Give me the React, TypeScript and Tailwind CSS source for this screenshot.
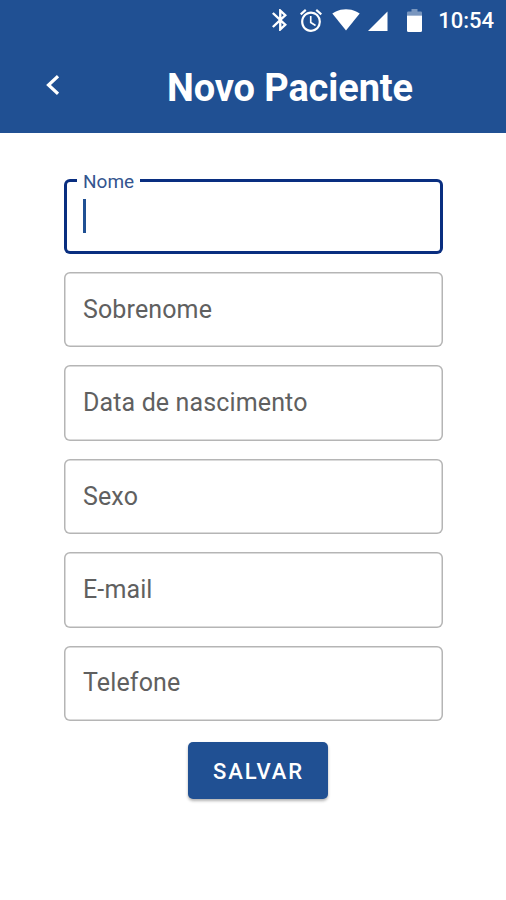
import { useState } from "react";
import { clsx } from "clsx";

const FIELDS = [
  { id: "nome", label: "Nome" },
  { id: "sobrenome", label: "Sobrenome" },
  { id: "nascimento", label: "Data de nascimento" },
  { id: "sexo", label: "Sexo" },
  { id: "email", label: "E-mail" },
  { id: "telefone", label: "Telefone" },
];

function StatusBar() {
  return (
    <div className="flex h-10 items-center pr-3 text-white">
      <svg viewBox="5 2 12.71 20" preserveAspectRatio="none" fill="currentColor" className="ml-auto h-[22px] w-[15px]">
        <path d="M17.71 7.71L12 2h-1v7.59L6.41 5 5 6.41 10.59 12 5 17.59 6.41 19 11 14.41V22h1l5.71-5.71-4.3-4.29 4.3-4.29zM13 5.83l1.88 1.88L13 9.59V5.83zm1.88 10.46L13 18.17v-3.76l1.88 1.88z" />
      </svg>
      <svg viewBox="2 1.8 20 20.2" preserveAspectRatio="none" fill="currentColor" className="ml-[13px] h-[23px] w-[22px]">
        <path d="M22 5.72l-4.6-3.86-1.29 1.53 4.6 3.86L22 5.72zM7.88 3.39L6.6 1.86 2 5.71l1.29 1.53 4.59-3.85zM12.5 8H11v6l4.75 2.85.75-1.23-4-2.37V8zM12 4c-4.97 0-9 4.03-9 9s4.02 9 9 9a9 9 0 0 0 0-18zm0 16c-3.87 0-7-3.13-7-7s3.13-7 7-7 7 3.13 7 7-3.13 7-7 7z" />
      </svg>
      <svg viewBox="0 0 28 22" fill="currentColor" className="ml-2.5 h-[22px] w-7">
        <path d="M14 21.5L27.7 4.6C27 4 21.8.3 14 .3S1 4 .3 4.6z" />
      </svg>
      <svg viewBox="0 0 20 20" fill="currentColor" className="ml-2 mt-0.5 h-5 w-5">
        <path d="M0 20H19.5V.5z" />
      </svg>
      <svg viewBox="0 0 15 23" fill="currentColor" className="ml-[19px] h-[23px] w-[15px]">
        <path opacity=".4" d="M4.5 0h6v2.5h3.3q1.2 0 1.2 1.2V6.5H0V3.7q0-1.2 1.2-1.2h3.3z" />
        <path d="M0 6.5h15v15q0 1.5-1.5 1.5h-12Q0 23 0 21.5z" />
      </svg>
      <span className="ml-4 mt-0.5 text-[22px] leading-6 font-medium">10:54</span>
    </div>
  );
}

function Header() {
  return (
    <header className="h-[133px] bg-[#205093]">
      <StatusBar />
      <div className="flex h-[93px] items-start text-white">
        <button aria-label="Voltar" className="mt-[35px] ml-[46px]">
          <svg viewBox="0 0 13 20" fill="none" stroke="currentColor" strokeWidth="3.2" className="h-5 w-[13px]">
            <path d="M12 1.2L2.5 10l9.500 8.8" />
          </svg>
        </button>
        <h1 className="mt-[25px] ml-[108px] text-[38px] leading-[46px] font-bold tracking-[-0.12px] whitespace-nowrap">
          Novo Paciente
        </h1>
      </div>
    </header>
  );
}

type FieldProps = {
  label: string;
  active: boolean;
  onSelect: () => void;
};

function Field({ label, active, onSelect }: FieldProps) {
  return (
    <div
      onClick={onSelect}
      className={clsx(
        "relative flex h-[75.5px] items-center rounded-md px-[19px]",
        active
          ? "inset-ring-[3px] inset-ring-[#092e80]"
          : "inset-ring-[1.5px] inset-ring-[#b5b5b5]"
      )}
    >
      {active ? (
        <>
          <span className="absolute -top-2 left-[13px] bg-white px-1.5 text-[19px] leading-[22px] text-[#34558f]">
            {label}
          </span>
          <span className="h-[34px] w-[3px] bg-[#205093]" />
        </>
      ) : (
        <span className="text-[25px] leading-8 tracking-[0.13px] text-[#606060]">{label}</span>
      )}
    </div>
  );
}

export default function App() {
  const [active, setActive] = useState("nome");

  return (
    <div className="h-[900px] w-[506px] overflow-hidden bg-white font-['Roboto',sans-serif]">
      <Header />
      <form className="flex flex-col pt-[45.6px] pr-[63px] pl-16">
        <div className="flex flex-col gap-[17.9px]">
          {FIELDS.map((field) => (
            <Field
              key={field.id}
              label={field.label}
              active={active === field.id}
              onSelect={() => setActive(field.id)}
            />
          ))}
        </div>
        <button
          type="button"
          className="mt-[21px] ml-[123.5px] h-[57px] w-[140px] rounded-[5px] bg-[#205093] pt-0.5 pl-0.5 text-[22px] font-medium tracking-[1.9px] text-white shadow-[0_2px_3px_rgba(0,0,0,0.3)]"
        >
          SALVAR
        </button>
      </form>
    </div>
  );
}
